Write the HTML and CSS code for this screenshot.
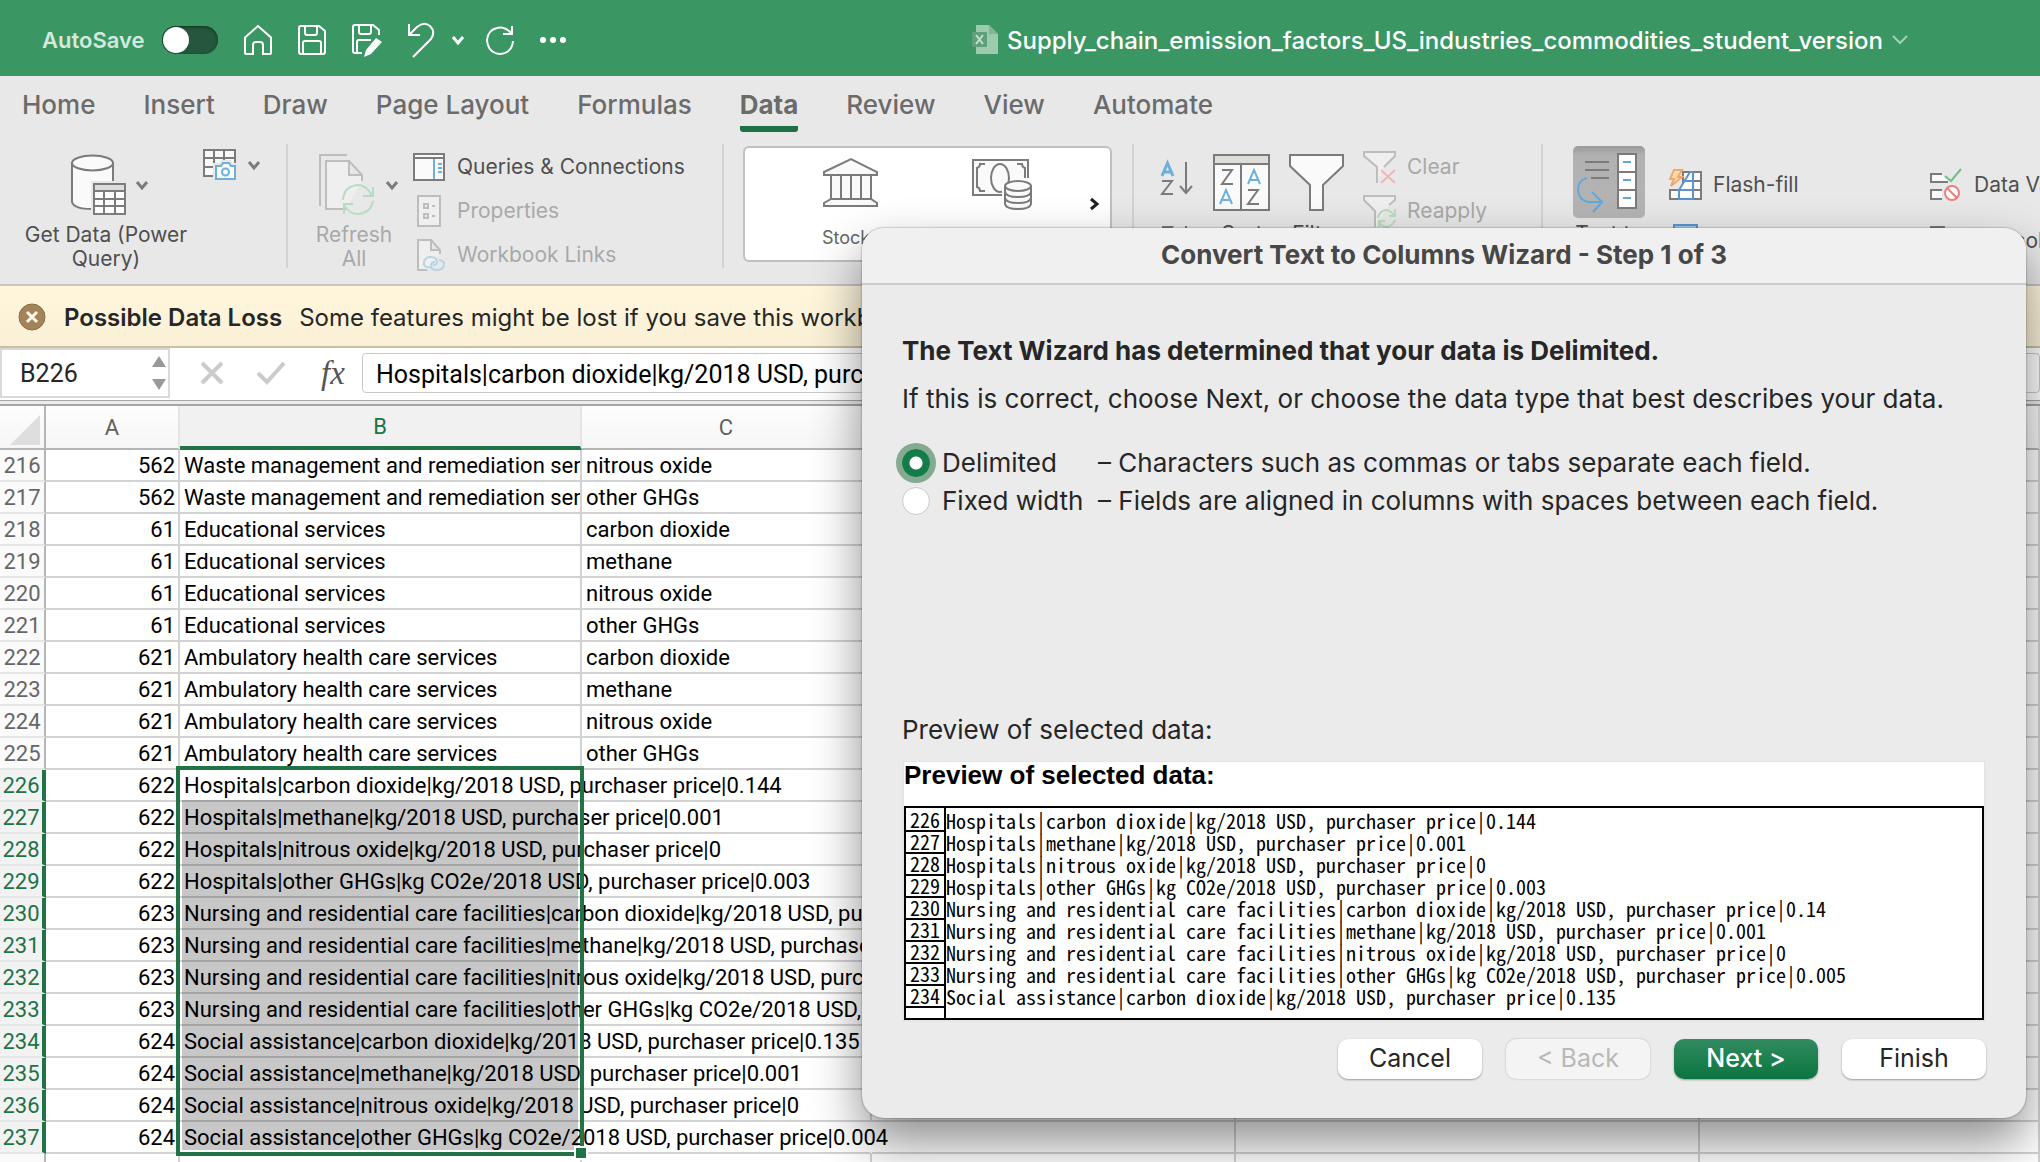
FILE: index.html
```html
<!DOCTYPE html>
<html lang="en">
<head>
<meta charset="utf-8">
<title>Supply_chain_emission_factors_US_industries_commodities_student_version</title>
<link rel="stylesheet" href="styles.css">
</head>
<body>
<header class="titlebar">
  <div class="quick">
    <label class="autosave" for="autosave">AutoSave</label>
    <input class="switch" type="checkbox" id="autosave" role="switch">
    <button class="tool" aria-label="Home"><svg width="30" height="32" viewBox="0 0 30 32"><path d="M2 13.500 L15 2 L28 13.500 V29 Q28 30 27 30 H20 V21 Q20 18 17 18 H13 Q10 18 10 21 V30 H3 Q2 30 2 29 Z"/></svg></button>
    <button class="tool" aria-label="Save"><svg width="30" height="32" viewBox="0 0 30 32"><path d="M4 2 H22 L28 7 V28 Q28 30 26 30 H4 Q2 30 2 28 V4 Q2 2 4 2 Z M8 2 V9 Q8 11 10 11 H18 Q20 11 20 9 V2 M6 30 V19 Q6 17 8 17 H22 Q24 17 24 19 V30"/></svg></button>
    <button class="tool" aria-label="Save as"><svg width="32" height="34" viewBox="0 0 32 34"><path d="M11 30 H4 Q2 30 2 28 V4 Q2 2 4 2 H22 L28 7 V12 M8 2 V9 Q8 11 10 11 H18 Q20 11 20 9 V2 M6 30 V19 Q6 17 8 17 H20"/><path class="solid" d="M25 15 L31 19 L20 31 L13 34 L15 27 Z"/></svg></button>
    <button class="tool undo" aria-label="Undo"><svg width="28" height="36" viewBox="0 0 28 36"><path d="M2 2 V13 H13 M2 13 L10 5 Q17 -1 23 4 Q29 10 24 17 L6 35"/></svg></button>
    <button class="tool caret" aria-label="Undo history"><svg width="14" height="12" viewBox="0 0 14 12"><path class="thick" d="M2 3 L7 9 L12 3"/></svg></button>
    <button class="tool redo" aria-label="Redo"><svg width="30" height="32" viewBox="0 0 30 32"><path d="M27 2 V10 H18 M27 10 Q20 2 12 4 Q3 6 2 16 Q3 29 15 30 Q27 29 28 17"/></svg></button>
    <button class="tool more" aria-label="More"><svg width="28" height="8" viewBox="0 0 28 8"><g class="solid"><circle cx="4" cy="4" r="3"/><circle cx="14" cy="4" r="3"/><circle cx="24" cy="4" r="3"/></g></svg></button>
  </div>
  <h1 class="doc-title">
    <svg width="28" height="32" viewBox="0 0 28 32"><path fill="#9dcbb0" d="M5 1 H18 L27 10 V30 H5 Z"/><path fill="#7cb896" d="M18 1 V10 H27 Z"/><rect fill="#5f9f7c" x="1" y="8" width="15" height="15" rx="1"/><path stroke="#c2e0ce" stroke-width="2" d="M5 11 L12 20 M12 11 L5 20"/></svg>
    <span>Supply_chain_emission_factors_US_industries_commodities_student_version</span>
    <svg class="title-caret" width="18" height="12" viewBox="0 0 18 12"><path d="M2 2 L9 9 L16 2"/></svg>
  </h1>
</header>

<nav class="tabs">
  <a href="#home">Home</a><a href="#insert">Insert</a><a href="#draw">Draw</a><a href="#layout">Page Layout</a><a href="#formulas">Formulas</a><a href="#data" class="active">Data</a><a href="#review">Review</a><a href="#view">View</a><a href="#automate">Automate</a>
</nav>

<section class="ribbon">
  <div class="group g-data">
    <button class="big get">
      <span class="pic"><svg width="56" height="62" viewBox="0 0 56 62"><path fill="#fafafa" stroke="none" d="M1 8 V48 Q2 55 21 55 L42 55 V8 Z"/><path d="M42 30 V9 M1 9 V48 Q3 55 21 55"/><ellipse fill="#fafafa" cx="21.500" cy="9" rx="20.500" ry="7.500"/><rect x="20" y="27" width="36" height="35" fill="#e8e8e8" stroke="none"/><rect fill="#fff" x="23" y="30" width="31" height="30"/><path fill="#ddddda" d="M23 30 H54 V37 H23 Z"/><path d="M23 45 H54 M23 52 H54 M33 37 V60 M44 37 V60"/></svg>
      <svg class="caret" width="14" height="12" viewBox="0 0 14 12"><path d="M2 3 L7 9 L12 3"/></svg></span>
      <span>Get Data (Power Query)</span>
    </button>
    <button class="small-pic" aria-label="Data from picture"><svg width="34" height="32" viewBox="0 0 34 32"><path fill="#fafafa" d="M12 27 H1 V1 H32 V14 M1 9 H32 M1 18 H12 M11 1 V27 M21 1 V14"/><path fill="#fff" stroke="#e8e8e8" stroke-width="6" d="M13 17 H18 L20 14 H26 L28 17 H32 V30 H13 Z"/><path fill="#fafafa" stroke="#6cb0de" d="M13 17 H18 L20 14 H26 L28 17 H32 V30 H13 Z"/><circle fill="none" stroke="#6cb0de" cx="22.500" cy="23" r="3.500"/></svg>
    <svg class="caret" width="14" height="12" viewBox="0 0 14 12"><path d="M2 3 L7 9 L12 3"/></svg></button>
  </div>

  <div class="group g-queries">
    <button class="big refresh" disabled>
      <span class="pic"><svg width="58" height="62" viewBox="0 0 58 62"><path fill="none" stroke="#bdbdbd" d="M1 52 V1 H28"/><path fill="#efefef" stroke="#bdbdbd" d="M27 55 H7 V7 H30 L43 21 V27 M30 7 V21 H43"/><path fill="none" stroke="#b9dcc0" d="M24 46 Q25 32 39 31 Q49 32 53 42 M54 33 V42 H44 M54 47 Q52 59 39 60 Q29 60 25 50 M25 60 V50 H34"/></svg>
      <svg class="caret dark" width="14" height="12" viewBox="0 0 14 12"><path d="M2 3 L7 9 L12 3"/></svg></span>
      <span>Refresh All</span>
    </button>
    <div class="list">
      <button class="row"><svg width="32" height="28" viewBox="0 0 32 28"><rect fill="#fafafa" x="1" y="1" width="30" height="26"/><path d="M1 5 H31"/><path stroke="#6cb0de" d="M21 6 V26 M25 11 H29 M25 15 H29 M25 19 H29"/></svg>Queries &amp; Connections</button>
      <button class="row" disabled><svg width="32" height="32" viewBox="0 0 32 32"><rect fill="#efefef" x="5" y="1" width="22" height="30"/><path d="M11 9 H15 V13 H11 Z M11 19 H15 V23 H11 Z M19 11 H22 M19 21 H22"/></svg>Properties</button>
      <button class="row" disabled><svg width="32" height="32" viewBox="0 0 32 32"><path fill="#efefef" d="M14 31 H5 V1 H18 L27 11 V15 M18 1 V11 H27"/><path fill="none" stroke="#b7d4e8" d="M17 28 Q10 29 11 23 Q12 18 18 18 Q24 18 24 23 Q24 26 20 26 M26 21 Q32 22 31 26 Q30 31 24 31 Q18 31 18 27 Q18 23 22 23"/></svg>Workbook Links</button>
    </div>
  </div>

  <div class="group g-types">
    <div class="gallery">
      <button class="type"><svg width="56" height="50" viewBox="0 0 56 50"><path fill="#fafafa" d="M1 14 L28 1 L54 14 V17 H1 Z M8 17 H48 V41 H8 Z M18 17 V41 M28 17 V41 M38 17 V41 M8 41 H48 L54 45 V48 H1 V45 Z"/></svg><span>Stocks</span></button>
      <button class="type"><svg width="60" height="52" viewBox="0 0 60 52"><path fill="#fafafa" d="M32 37 H1 V2 H56 V20"/><path fill="none" d="M13 6 H8 Q8 9 5 10 V29 Q8 30 8 33 H13 M45 6 H50 Q50 9 53 10 V20"/><ellipse fill="none" cx="28" cy="20" rx="9" ry="14"/><path fill="#fff" stroke="#fff" stroke-width="6" d="M33 28 H59 V46 H33 Z"/><path fill="#fafafa" d="M33 28 V46 Q34 51 46 51 Q58 51 59 46 V28"/><ellipse fill="#fafafa" cx="46" cy="28" rx="13" ry="5"/><path fill="none" d="M33 34 Q34 39 46 39 Q58 39 59 34 M33 40 Q34 45 46 45 Q58 45 59 40"/></svg><span>Currencies</span></button>
      <button class="next-type" aria-label="More data types"><svg width="12" height="14" viewBox="0 0 12 14"><path d="M3 2 L9 7 L3 12"/></svg></button>
    </div>
  </div>

  <div class="group g-sort">
    <div class="az">
      <button aria-label="Sort ascending"><svg width="34" height="34" viewBox="0 0 34 34"><path fill="none" stroke="#6cb0de" stroke-width="3" d="M2 15 L7.500 2 L13 15 M4 11 H11"/><path fill="none" d="M2 20 H12 L2 33 H13 M26 1 V32 M20 25 L26 32 L32 25"/></svg></button>
      <button aria-label="Sort descending"><svg width="34" height="34" viewBox="0 0 34 34"><path fill="none" d="M2 2 H12 L2 14 H13 M26 1 V32 M20 25 L26 32 L32 25"/></svg></button>
    </div>
    <button class="big sort"><svg width="58" height="58" viewBox="0 0 58 58"><rect fill="#fafafa" x="1" y="1" width="55" height="55"/><path fill="#ddddda" d="M1 1 H56 V10 H1 Z"/><path fill="none" d="M28 10 V56 M9 16 H19 L9 30 H20 M35 36 H45 L35 50 H46"/><path fill="none" stroke="#6cb0de" d="M35 30 L41 16 L47 30 M37 26 H45 M7 50 L13 36 L19 50 M9 46 H17"/></svg><span>Sort</span></button>
    <button class="big filter"><svg width="56" height="58" viewBox="0 0 56 58"><path fill="#fafafa" d="M1 1 H54 V12 L34 31 V56 H21 V31 L1 12 Z"/></svg><span>Filter</span></button>
    <div class="list narrow">
      <button class="row" disabled><svg width="34" height="34" viewBox="0 0 34 34"><path fill="#efefef" d="M14 33 V17 L1 6 V2 H32 V6 L21 17"/><path stroke="#f0b6b4" d="M18 20 L32 33 M32 20 L18 33"/></svg>Clear</button>
      <button class="row" disabled><svg width="34" height="34" viewBox="0 0 34 34"><path fill="#efefef" d="M12 33 V17 L1 6 V2 H32 V6 L26 11"/><path fill="none" stroke="#b9dcc0" d="M15 24 Q16 17 23 16 Q29 17 31 22 M32 15 V22 H26 M32 26 Q30 32 24 33 Q17 32 16 27 M16 33 V27 H22"/></svg>Reapply</button>
    </div>
  </div>

  <div class="group g-tools">
    <button class="big columns"><span class="pressed"><svg width="64" height="62" viewBox="0 0 64 62"><rect fill="#fff" x="42" y="3" width="18" height="54"/><path d="M42 21 H60 M42 39 H60 M9 11 H33 M9 19 H33 M15 27 H33"/><path fill="none" stroke="#5ea9dc" d="M47 11 H55 M47 29 H55 M47 47 H55 M11 27 Q2 29 2 39 Q3 50 13 51 H26 M16 41 L26 51 L17 61"/></svg></span><span>Text to Columns</span></button>
    <div class="list tall flash">
      <button class="row"><svg width="34" height="32" viewBox="0 0 34 32"><path fill="#fafafa" d="M14 3 H32 V30 H1 V21 H14 Z M1 21 H32 M24 12 H32"/><path fill="#fff" stroke="#5b93d0" d="M10 21 V30 H24 V3 H21 L10 21 M14 12 H24 M10 21 H24"/><path fill="#fbdcae" stroke="#f3a76c" d="M5 1 H13 L9 8 H13 L2 17 L5 10 H1 Z"/></svg>Flash-fill</button>
      <button class="row"><svg width="34" height="34" viewBox="0 0 34 34"><rect fill="#a9cdec" stroke="#5b93d0" x="5" y="1" width="23" height="30"/></svg>Remove Duplicates</button>
    </div>
    <div class="list tall">
      <button class="row"><svg width="34" height="34" viewBox="0 0 34 34"><path fill="#fafafa" d="M12 6 H1 V14 H18 M12 22 H1 V31 H12"/><path fill="none" stroke="#6fc08a" d="M15 8 L21 13 L31 1"/><circle fill="#fff" stroke="#ee7f7b" cx="22" cy="25" r="7"/><path stroke="#ee7f7b" d="M17 20 L27 30"/></svg>Data Validation</button>
      <button class="row"><svg width="34" height="30" viewBox="0 0 34 30"><path fill="#fafafa" d="M1 1 H14 V10 H1 Z M1 18 H14 V28 H1 Z"/></svg>Consolidate</button>
    </div>
  </div>
</section>

<div class="warning" role="status">
  <button class="dismiss" aria-label="Dismiss"><svg width="28" height="28" viewBox="0 0 28 28"><circle fill="#a3845a" stroke="#8c6c43" cx="14" cy="14" r="13"/><path stroke="#fff8e2" stroke-width="3" d="M9 9 L19 19 M19 9 L9 19"/></svg></button>
  <strong>Possible Data Loss</strong>
  <span>Some features might be lost if you save this workbook.</span>
</div>

<div class="formula-bar">
  <div class="name-box">
    <input type="text" value="B226" aria-label="Name box">
    <svg width="16" height="36" viewBox="0 0 16 36"><path fill="#999" stroke="none" d="M1 12 L8 1 L15 12 Z M1 24 L8 35 L15 24 Z"/></svg>
  </div>
  <button aria-label="Cancel entry"><svg width="24" height="24" viewBox="0 0 24 24"><path stroke="#cbcbcb" stroke-width="4" d="M2 2 L22 22 M22 2 L2 22"/></svg></button>
  <button aria-label="Accept entry"><svg width="30" height="24" viewBox="0 0 30 24"><path fill="none" stroke="#cbcbcb" stroke-width="4" d="M2 12 L11 21 L28 2"/></svg></button>
  <button class="fx" aria-label="Insert function">fx</button>
  <input class="formula" type="text" aria-label="Formula" value="Hospitals|carbon dioxide|kg/2018 USD, purchaser price|0.144">
</div>

<main class="sheet">
<table>
<colgroup><col class="c-num"><col class="c-a"><col class="c-b"><col class="c-c"><col class="c-d"><col class="c-e"><col></colgroup>
<thead><tr><th class="corner"><svg width="30" height="30" viewBox="0 0 30 30"><path fill="#dedede" stroke="none" d="M30 0 V30 H0 Z"/></svg></th><th>A</th><th class="on">B</th><th>C</th><th>D</th><th>E</th><th>F</th></tr></thead>
<tbody>
<tr><th>216</th><td>562</td><td>Waste management and remediation services</td><td>nitrous oxide</td><td></td><td></td><td></td></tr>
<tr><th>217</th><td>562</td><td>Waste management and remediation services</td><td>other GHGs</td><td></td><td></td><td></td></tr>
<tr><th>218</th><td>61</td><td>Educational services</td><td>carbon dioxide</td><td></td><td></td><td></td></tr>
<tr><th>219</th><td>61</td><td>Educational services</td><td>methane</td><td></td><td></td><td></td></tr>
<tr><th>220</th><td>61</td><td>Educational services</td><td>nitrous oxide</td><td></td><td></td><td></td></tr>
<tr><th>221</th><td>61</td><td>Educational services</td><td>other GHGs</td><td></td><td></td><td></td></tr>
<tr><th>222</th><td>621</td><td>Ambulatory health care services</td><td>carbon dioxide</td><td></td><td></td><td></td></tr>
<tr><th>223</th><td>621</td><td>Ambulatory health care services</td><td>methane</td><td></td><td></td><td></td></tr>
<tr><th>224</th><td>621</td><td>Ambulatory health care services</td><td>nitrous oxide</td><td></td><td></td><td></td></tr>
<tr><th>225</th><td>621</td><td>Ambulatory health care services</td><td>other GHGs</td><td></td><td></td><td></td></tr>
</tbody>
<tbody class="selected">
<tr><th>226</th><td>622</td><td>Hospitals|carbon dioxide|kg/2018 USD, purchaser price|0.144</td><td></td><td></td><td></td><td></td></tr>
<tr><th>227</th><td>622</td><td>Hospitals|methane|kg/2018 USD, purchaser price|0.001</td><td></td><td></td><td></td><td></td></tr>
<tr><th>228</th><td>622</td><td>Hospitals|nitrous oxide|kg/2018 USD, purchaser price|0</td><td></td><td></td><td></td><td></td></tr>
<tr><th>229</th><td>622</td><td>Hospitals|other GHGs|kg CO2e/2018 USD, purchaser price|0.003</td><td></td><td></td><td></td><td></td></tr>
<tr><th>230</th><td>623</td><td>Nursing and residential care facilities|carbon dioxide|kg/2018 USD, purchaser price|0.14</td><td></td><td></td><td></td><td></td></tr>
<tr><th>231</th><td>623</td><td>Nursing and residential care facilities|methane|kg/2018 USD, purchaser price|0.001</td><td></td><td></td><td></td><td></td></tr>
<tr><th>232</th><td>623</td><td>Nursing and residential care facilities|nitrous oxide|kg/2018 USD, purchaser price|0</td><td></td><td></td><td></td><td></td></tr>
<tr><th>233</th><td>623</td><td>Nursing and residential care facilities|other GHGs|kg CO2e/2018 USD, purchaser price|0.005</td><td></td><td></td><td></td><td></td></tr>
<tr><th>234</th><td>624</td><td>Social assistance|carbon dioxide|kg/2018 USD, purchaser price|0.135</td><td></td><td></td><td></td><td></td></tr>
<tr><th>235</th><td>624</td><td>Social assistance|methane|kg/2018 USD, purchaser price|0.001</td><td></td><td></td><td></td><td></td></tr>
<tr><th>236</th><td>624</td><td>Social assistance|nitrous oxide|kg/2018 USD, purchaser price|0</td><td></td><td></td><td></td><td></td></tr>
<tr><th>237</th><td>624</td><td>Social assistance|other GHGs|kg CO2e/2018 USD, purchaser price|0.004</td><td class="covered"></td><td></td><td></td><td></td></tr>
</tbody>
<tbody><tr><th></th><td></td><td></td><td></td><td></td><td></td><td></td></tr></tbody>
</table>
<div class="selection"><i class="handle"></i></div>
</main>

<section class="dialog" role="dialog" aria-labelledby="wizard-title">
  <h2 id="wizard-title">Convert Text to Columns Wizard - Step 1 of 3</h2>
  <form class="wizard">
    <p class="lead">The Text Wizard has determined that your data is Delimited.</p>
    <p class="hint">If this is correct, choose Next, or choose the data type that best describes your data.</p>
    <div class="choices">
      <input type="radio" name="kind" id="delimited" checked><label for="delimited">Delimited</label><span>– Characters such as commas or tabs separate each field.</span>
      <input type="radio" name="kind" id="fixed"><label for="fixed">Fixed width</label><span>– Fields are aligned in columns with spaces between each field.</span>
    </div>
    <p class="preview-label">Preview of selected data:</p>
    <div class="preview">
      <h3>Preview of selected data:</h3>
      <table>
        <tr><th>226</th><td>Hospitals|carbon dioxide|kg/2018 USD, purchaser price|0.144</td></tr>
        <tr><th>227</th><td>Hospitals|methane|kg/2018 USD, purchaser price|0.001</td></tr>
        <tr><th>228</th><td>Hospitals|nitrous oxide|kg/2018 USD, purchaser price|0</td></tr>
        <tr><th>229</th><td>Hospitals|other GHGs|kg CO2e/2018 USD, purchaser price|0.003</td></tr>
        <tr><th>230</th><td>Nursing and residential care facilities|carbon dioxide|kg/2018 USD, purchaser price|0.14</td></tr>
        <tr><th>231</th><td>Nursing and residential care facilities|methane|kg/2018 USD, purchaser price|0.001</td></tr>
        <tr><th>232</th><td>Nursing and residential care facilities|nitrous oxide|kg/2018 USD, purchaser price|0</td></tr>
        <tr><th>233</th><td>Nursing and residential care facilities|other GHGs|kg CO2e/2018 USD, purchaser price|0.005</td></tr>
        <tr><th>234</th><td>Social assistance|carbon dioxide|kg/2018 USD, purchaser price|0.135</td></tr>
        <tr class="rest"><th></th><td></td></tr>
      </table>
    </div>
    <div class="actions">
      <button type="button">Cancel</button>
      <button type="button" disabled>&lt; Back</button>
      <button type="button" class="primary">Next &gt;</button>
      <button type="button">Finish</button>
    </div>
  </form>
</section>
</body>
</html>
```
FILE: styles.css
```css
* { box-sizing: border-box; }
body {
  margin: 0;
  position: relative;
  height: 100vh;
  overflow: hidden;
  background: #fff;
  color: #262626;
  font-family: Inter, "Liberation Sans", sans-serif;
  font-size: 21px;
}
button {
  margin: 0;
  padding: 0;
  border: 0;
  background: none;
  color: inherit;
  font: inherit;
}
input { font: inherit; color: inherit; }
svg { display: block; flex: none; }
h1, h2, h3, p { margin: 0; font-weight: 400; }

/* Title bar */
.titlebar {
  display: flex;
  align-items: center;
  height: 76px;
  padding-top: 4px;
  background: #3a9763;
  color: #fff;
}
.quick {
  display: flex;
  flex: none;
  align-items: center;
  width: 840px;
  padding-left: 42px;
}
.autosave {
  width: 120px;
  color: #d3e9dc;
  font-size: 22px;
  font-weight: 600;
}
.switch {
  appearance: none;
  display: flex;
  width: 56px;
  height: 28px;
  margin: 0 25px 0 0;
  border-radius: 14px;
  background: #24573b;
  box-shadow: inset 0 1px 3px #123420;
}
.switch::before {
  content: "";
  width: 26px;
  height: 26px;
  margin: 1px;
  border-radius: 50%;
  background: #fff;
}
.tool { margin-right: 24px; }
.tool svg { fill: none; stroke: #fff; stroke-width: 2; overflow: visible; }
.tool .solid { fill: #fff; stroke: none; }
.tool .thick { stroke-width: 3; }
.undo { margin-right: 16px; }
.caret.tool { margin-right: 20px; }
.redo { margin-right: 24px; }
.doc-title {
  display: flex;
  flex: 1;
  align-items: center;
  justify-content: center;
  gap: 8px;
  font-size: 24px;
  font-weight: 500;
  white-space: nowrap;
}
.title-caret { fill: none; stroke: #a5d0b7; stroke-width: 2; }

/* Ribbon tabs */
.tabs {
  display: flex;
  gap: 48px;
  height: 68px;
  padding: 13px 22px;
  background: #e8e8e8;
  font-size: 26px;
  font-weight: 500;
  line-height: 32px;
  white-space: nowrap;
}
.tabs a { height: 43px; color: #6b6b6b; text-decoration: none; }
.tabs .active { border-bottom: 6px solid #1e7145; border-radius: 3px; font-weight: 700; }

/* Ribbon */
.ribbon {
  display: flex;
  height: 142px;
  padding-bottom: 16px;
  border-bottom: 2px solid #c6c6c6;
  background: #e8e8e8;
  color: #4f4f4f;
  line-height: 24px;
  overflow: hidden;
}
.ribbon svg { fill: none; stroke: #7b7b7b; stroke-width: 2; overflow: visible; }
.ribbon .caret { stroke-width: 3; }
.ribbon button:disabled { color: #a9a9a9; }
.ribbon .row:disabled svg { stroke: #bdbdbd; }
.group { display: flex; flex: none; align-items: flex-start; border-right: 2px solid #d3d3d3; }
.big { display: flex; flex-direction: column; align-items: center; padding-top: 10px; white-space: nowrap; }
.pic { display: flex; align-items: center; gap: 8px; margin-bottom: 7px; }
.get { width: 174px; white-space: normal; }
.get .pic { margin-left: 8px; }
.g-data { width: 288px; padding: 0 0 0 19px; }
.small-pic { display: flex; align-items: center; gap: 10px; margin: 5px 0 0 10px; }
.g-queries { width: 436px; padding-left: 24px; }
.refresh { width: 84px; margin-right: 17px; white-space: normal; }
.refresh .pic { margin-left: 10px; }
.list { display: flex; flex-direction: column; }
.row { display: flex; align-items: center; gap: 12px; height: 44px; text-align: left; white-space: nowrap; }
.g-queries .list, .narrow { padding-top: 1px; }
.g-types { width: 410px; padding: 2px 20px 2px 19px; }
.gallery {
  display: flex;
  align-items: center;
  width: 100%;
  height: 116px;
  border: 2px solid #c0c0c0;
  border-radius: 6px;
  background: #fff;
}
.type { display: flex; flex: 1; flex-direction: column; align-items: center; justify-content: space-between; height: 92px; padding-left: 32px; font-size: 18px; color: #666; }
.type + .type { padding-left: 4px; }
.ribbon .next-type svg { stroke: #222; stroke-width: 3; }
.next-type { padding: 0 10px 0 12px; }
.g-sort { width: 409px; padding-left: 26px; }
.az { display: flex; flex-direction: column; gap: 30px; margin: 17px 19px 0 0; }
.sort span, .filter span { margin-top: 10px; }
.filter { margin: 0 18px; }
.narrow .row { gap: 10px; }
.g-tools { flex: 1; min-width: 0; padding-left: 30px; border: 0; }
.columns { flex: none; width: 72px; padding-top: 2px; margin-right: 24px; white-space: normal; }
.pressed {
  width: 72px;
  height: 72px;
  padding: 5px 3px;
  margin-bottom: 4px;
  border-radius: 5px;
  background: linear-gradient(#9b9b9b, #b1b1b1 10px, #b4b4b4);
}
.tall { flex: none; padding-top: 13px; }
.tall .row { gap: 10px; height: 56px; }
.flash { width: 261px; }

/* Warning strip */
.warning {
  display: flex;
  align-items: center;
  height: 62px;
  padding: 2px 18px 0;
  border-bottom: 2px solid #c8bfa4;
  background: linear-gradient(#fff6dd, #f9f0d6);
  font-size: 24px;
  white-space: nowrap;
}
.dismiss { margin-right: 18px; }
.warning strong { margin-right: 17px; font-weight: 600; }

/* Formula bar */
.formula-bar {
  display: flex;
  align-items: center;
  height: 58px;
  padding-bottom: 6px;
  border-bottom: 2px solid #a6a6a6;
  background: linear-gradient(#fff 52px, #a6a6a6 52px, #a6a6a6 53px, #ececec 53px);
  font-family: Roboto, "Liberation Sans", sans-serif;
  font-size: 25px;
}
.name-box {
  display: flex;
  align-items: center;
  width: 170px;
  height: 50px;
  margin-right: 30px;
  border: 2px solid #d9d9d9;
}
.name-box input { width: 132px; margin-right: 17px; padding: 0 0 0 18px; border: 0; background: none; outline: 0; }
.formula-bar button { margin-right: 32px; }
.formula-bar .fx {
  width: 30px;
  margin-right: 14px;
  color: #555;
  font-family: "Liberation Serif", serif;
  font-size: 33px;
  font-style: italic;
  line-height: 40px;
}
.formula { flex: 1; min-width: 0; height: 40px; padding: 2px 13px 0; border: 1px solid #c9c9c9; border-radius: 4px; background: #fff; color: #000; }

/* Sheet */
.sheet { position: relative; font-family: Roboto, "Liberation Sans", sans-serif; font-size: 22px; line-height: 28px; }
.sheet table { width: 100%; table-layout: fixed; border-collapse: separate; border-spacing: 0; }
.c-num { width: 46px; }
.c-a { width: 134px; }
.c-b { width: 402px; }
.c-c { width: 290px; }
.c-d { width: 364px; }
.c-e { width: 464px; }
.sheet th, .sheet td {
  height: 32px;
  padding: 2px 4px 0;
  border-right: 2px solid #d2d2d2;
  border-bottom: 2px solid #d2d2d2;
  font-weight: 400;
  white-space: nowrap;
}
.sheet td { color: #000; overflow: hidden; text-align: left; }
.sheet td:nth-child(2) { padding-right: 3px; text-align: right; }
.sheet thead th { height: 44px; border-right-color: #e4e4e4; border-bottom-color: #b5b5b5; background: linear-gradient(#fdfdfd, #f6f6f6); color: #5f5f5f; }
.sheet thead .corner { padding: 6px 4px 0 10px; border-right-color: #b5b5b5; }
.sheet thead .on { border-bottom: 4px solid #217346; background: #f1f1f1; color: #217346; }
.sheet tbody th { padding: 2px 0 0; border-right-color: #b5b5b5; border-bottom-color: #e6e6e6; background: #fafafa; color: #666; }
.sheet .selected th { border-right: 4px solid #217346; background: #f2f2f2; color: #217346; }
.sheet .selected td { overflow: visible; }
.sheet .selected td:nth-child(3), .sheet .selected .covered { border-right-color: transparent; }
/* The active range: its first row stays clear, the rest is tinted. */
.selection {
  position: absolute;
  left: 176px;
  top: 360px;
  width: 408px;
  height: 390px;
  padding: 30px 2px 2px;
  border: 4px solid #217346;
  background: rgba(0, 0, 0, .22) content-box;
}
.handle { position: absolute; right: -8px; bottom: -8px; width: 14px; height: 14px; border: 2px solid #fff; background: #217346; }

/* Wizard window */
.dialog {
  position: absolute;
  left: 862px;
  right: 14px;
  top: 228px;
  border-radius: 22px;
  background: #ebebeb;
  box-shadow: 0 0 2px rgba(0, 0, 0, .5), 0 24px 50px rgba(0, 0, 0, .45);
  font-size: 26px;
  line-height: 32px;
}
.dialog h2 {
  height: 57px;
  padding-top: 11px;
  border-bottom: 2px solid #cbcbcb;
  border-radius: 22px 22px 0 0;
  background: #f0f0f0;
  color: #474747;
  font-size: 26px;
  font-weight: 700;
  text-align: center;
}
.wizard { padding: 50px 40px 39px; }
.lead { font-weight: 700; }
.hint { margin-top: 16px; white-space: nowrap; }
.choices {
  display: grid;
  grid-template-columns: 28px 144px 1fr;
  column-gap: 12px;
  grid-auto-rows: 38px;
  align-items: center;
  margin-top: 29px;
  white-space: nowrap;
}
.choices input { appearance: none; width: 28px; height: 28px; margin: 0; border: 1px solid #c9c9c9; border-radius: 50%; background: #fff; }
.choices input:checked { border: 0; background: radial-gradient(#fff 6px, #147c48 7px); box-shadow: 0 0 0 6px #84aa90; }
.preview-label { margin-top: 194px; }
.preview { margin-top: 15px; border: 2px solid #e5e5e5; border-top-width: 1px; background: #fff; }
.preview h3 { height: 44px; color: #000; font: bold 26px/26px "Liberation Sans", sans-serif; }
.preview table { width: 100%; border: 2px solid #000; border-spacing: 0; font-family: "Noto Sans Mono CJK SC", "Liberation Mono", monospace; font-size: 20px; line-height: 20px; color: #000; }
.preview th { width: 40px; height: 22px; padding: 0; border: solid #000; border-width: 0 2px 2px 0; font-weight: 400; }
.preview td { padding: 0; white-space: nowrap; }
.preview tr:first-child th, .preview tr:first-child td { padding-top: 2px; }
.preview .rest th { height: 10px; border-bottom: 0; }
.actions { display: flex; justify-content: flex-end; gap: 24px; margin-top: 17px; }
.actions button {
  width: 144px;
  height: 40px;
  padding-bottom: 2px;
  border-radius: 10px;
  background: #fff;
  box-shadow: 0 1px 2px rgba(0, 0, 0, .35);
  font-size: 25px;
}
.actions button:disabled { background: #f4f4f4; color: #b8b8b8; box-shadow: 0 0 2px rgba(0, 0, 0, .25); }
.actions .primary { background: linear-gradient(#318b60, #0b7540); color: #fff; font-weight: 500; }
```
